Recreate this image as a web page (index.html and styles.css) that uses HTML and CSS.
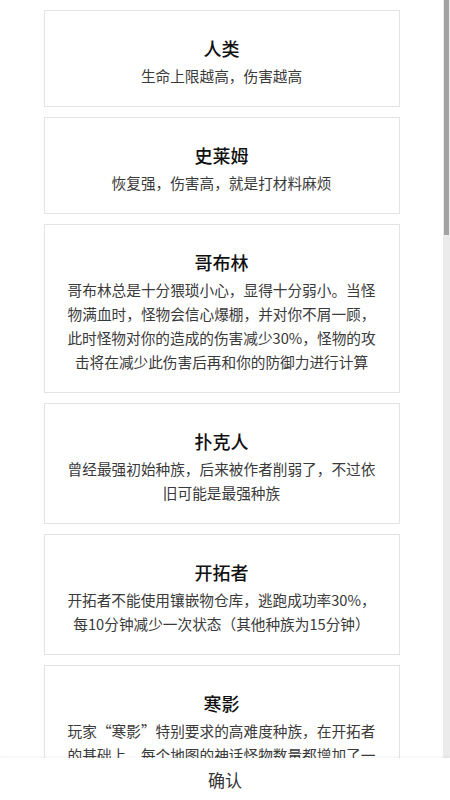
FILE: index.html
```html
<!DOCTYPE html>
<html lang="zh-CN">
<head>
<meta charset="utf-8">
<title>选择种族</title>
<link rel="stylesheet" href="styles.css">
</head>
<body>
<div class="app">
  <div class="viewport">
    <main class="list">
      <section class="card">
        <h2 class="title">人类</h2>
        <p class="desc">生命上限越高，伤害越高</p>
      </section>
      <section class="card">
        <h2 class="title">史莱姆</h2>
        <p class="desc">恢复强，伤害高，就是打材料麻烦</p>
      </section>
      <section class="card">
        <h2 class="title">哥布林</h2>
        <p class="desc">哥布林总是十分猥琐小心，显得十分弱小。当怪物满血时，怪物会信心爆棚，并对你不屑一顾，此时怪物对你的造成的伤害减少30%，怪物的攻击将在减少此伤害后再和你的防御力进行计算</p>
      </section>
      <section class="card">
        <h2 class="title">扑克人</h2>
        <p class="desc">曾经最强初始种族，后来被作者削弱了，不过依旧可能是最强种族</p>
      </section>
      <section class="card">
        <h2 class="title">开拓者</h2>
        <p class="desc">开拓者不能使用镶嵌物仓库，逃跑成功率30%，每10分钟减少一次状态（其他种族为15分钟）</p>
      </section>
      <section class="card">
        <h2 class="title">寒影</h2>
        <p class="desc">玩家“寒影”特别要求的高难度种族，在开拓者的基础上，每个地图的神话怪物数量都增加了一倍</p>
      </section>
    </main>
    <div class="scrollbar">
      <div class="thumb"></div>
    </div>
  </div>
  <footer class="footer">
    <button class="confirm" type="button">确认</button>
  </footer>
</div>
</body>
</html>
```
FILE: styles.css
```css
html, body {
  margin: 0;
  padding: 0;
  background: #ffffff;
}

body {
  font-family: "Noto Sans CJK SC", "Noto Sans", sans-serif;
  color: #333;
}

.app {
  display: flex;
  flex-direction: column;
  height: 800px;
  overflow: hidden;
}

.viewport {
  height: 758px;
  flex: none;
  display: flex;
  overflow: hidden;
}

.list {
  flex: 1;
  min-width: 0;
  overflow: hidden;
  box-sizing: border-box;
  padding: 10px 0 0;
  display: flex;
  flex-direction: column;
  gap: 10px;
  align-items: center;
}

.scrollbar {
  flex: none;
  width: 7px;
  background: #ebebeb;
  display: flex;
  flex-direction: column;
}

.thumb {
  height: 235px;
  margin-left: 1px;
  width: 5px;
  background: #a2a2a2;
}

.card {
  flex: none;
  width: 356px;
  box-sizing: border-box;
  border: 1px solid #e3e3e3;
  background: #fff;
  padding: 25px 20px 18px;
  text-align: center;
}

.title {
  margin: 0;
  font-size: 18px;
  line-height: 24px;
  font-weight: 500;
  color: #111;
}

.desc {
  margin: 4px 0 0;
  font-size: 14.67px;
  line-height: 24px;
  color: #3a3a3a;
}

.footer {
  flex: none;
  height: 42px;
  display: flex;
  align-items: center;
  justify-content: center;
  background: #fff;
  box-shadow: 0 -1px 3px rgba(0, 0, 0, 0.06);
  position: relative;
}

.confirm {
  border: none;
  background: none;
  padding: 0;
  font-family: inherit;
  font-size: 17px;
  color: #333;
  cursor: pointer;
}
```
